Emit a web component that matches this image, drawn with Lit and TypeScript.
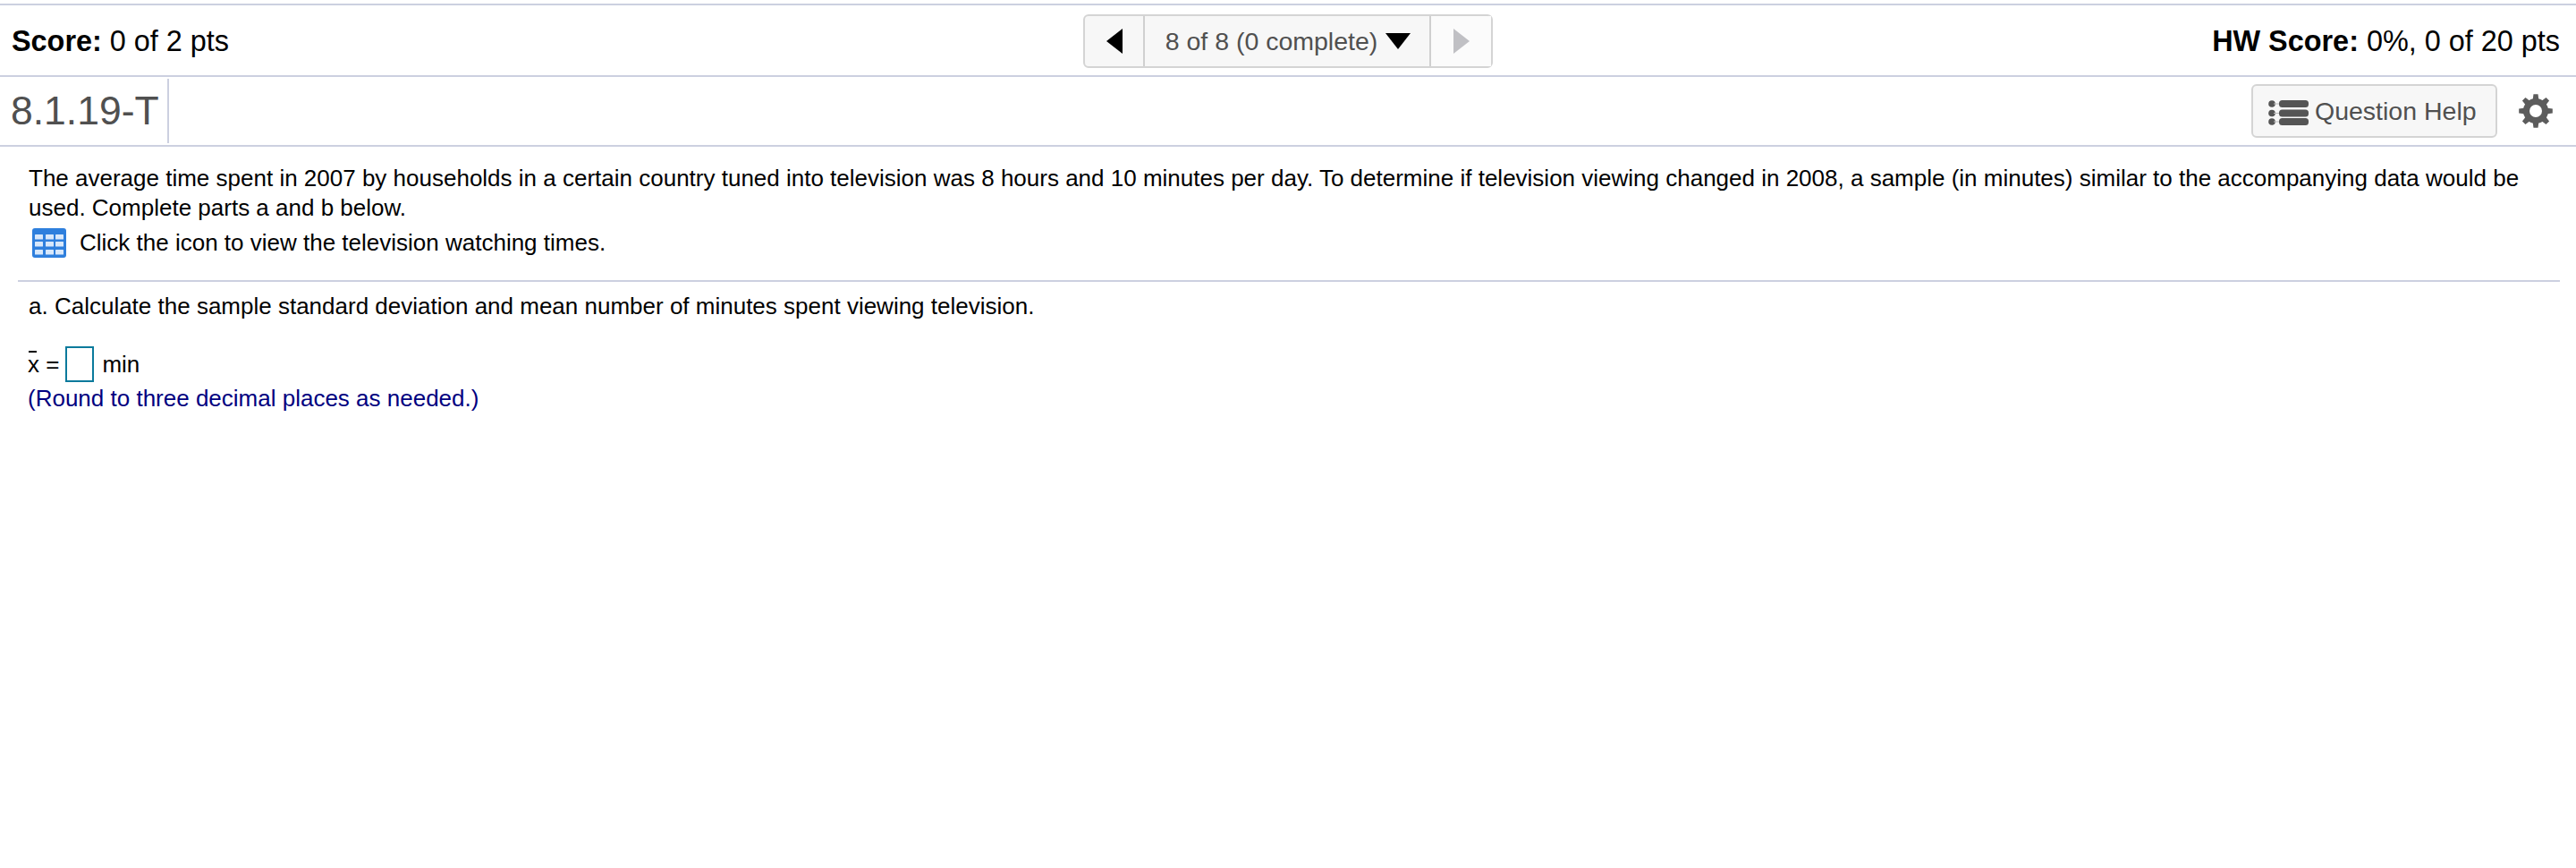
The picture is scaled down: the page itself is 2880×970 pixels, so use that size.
import { LitElement, html, css, svg } from "lit";
import { customElement } from "lit/decorators.js";

@customElement("app-root")
export class AppRoot extends LitElement {
  static styles = css`
    :host { display: block; width: 2880px; height: 970px; background: #fff; font-family: "Liberation Sans", Arial, sans-serif; color: #000; overflow: hidden; }
    .top { margin-top: 4px; height: 78px; box-sizing: content-box; border-top: 2px solid #ccd0e0; border-bottom: 2px solid #ccd0e0; display: flex; align-items: center; justify-content: space-between; padding: 0 18px 0 13px; font-size: 32.4px; position: relative; }
    .top b { font-weight: 700; }
    .score { padding-top: 2px; }
    .pager { position: absolute; left: 1211px; top: 10px; width: 458px; height: 60px; box-sizing: border-box; border: 2px solid #d4d4d4; border-radius: 6px; background: #f7f7f7; display: flex; color: #505050; font-size: 28.5px; }
    .prev { width: 67px; border-right: 2px solid #d0d0d0; display: flex; align-items: center; justify-content: center; box-sizing: border-box; }
    .mid { width: 320px; box-sizing: border-box; border-right: 2px solid #d0d0d0; display: flex; align-items: center; justify-content: center; gap: 9px; white-space: nowrap; padding-left: 2px; }
    .next { flex: 1; display: flex; align-items: center; justify-content: center; background: #fbfbfb; }
    .second { height: 76px; border-bottom: 2px solid #ccd0e0; display: flex; align-items: center; }
    .qid { width: 189px; box-sizing: border-box; padding-left: 12px; font-size: 44.5px; color: #505050; height: 72px; border-right: 2px solid #ccd0e0; display: flex; align-items: center; white-space: nowrap; }
    .right { margin-left: auto; display: flex; align-items: center; padding-right: 25px; }
    .help { width: 275px; height: 60px; box-sizing: border-box; border: 2px solid #d4d4d4; border-radius: 6px; background: #f7f7f7; color: #505050; font-size: 28.5px; display: flex; align-items: center; padding-left: 17px; gap: 6px; white-space: nowrap; }
    .gear { margin-left: 23px; display: block; }
    .content { padding: 0 18px 0 20px; }
    .q { padding: 0 0 0 12px; font-size: 26px; line-height: 33px; margin-top: 19px; width: 2820px; box-sizing: border-box; }
    .click { display: flex; align-items: center; gap: 15px; margin: 3px 0 0 16px; font-size: 26px; height: 38px; }
    .click svg { display: block; }
    hr { border: 0; border-top: 2px solid #ccd0e0; margin: 23px 0 0 0; }
    .a { font-size: 26px; line-height: 34px; margin: 10px 0 0 12px; }
    .ans { display: flex; align-items: center; margin: 28px 0 0 11px; font-size: 26px; height: 40px; }
    .x { position: relative; }
    .x::before { content: ""; position: absolute; left: 1px; top: 0; width: 9px; height: 2px; background: #000; }
    .box { width: 32px; height: 40px; border: 2px solid #0a7a9c; box-sizing: border-box; margin: 0 9px 0 7px; }
    .hint { margin: 1px 0 0 11px; font-size: 26px; color: #000080; line-height: 34px; }
  `;
  render() {
    const angles = [0, 45, 90, 135, 180, 225, 270, 315];
    const cols = [3, 15, 26];
    const rows = [7, 15, 24];
    return html`
      <div class="top">
        <div class="score"><b>Score:</b> 0 of 2 pts</div>
        <div class="pager">
          <div class="prev"><svg width="18" height="28" viewBox="0 0 18 28"><path d="M0 14 18 0V28Z" fill="#000"/></svg></div>
          <div class="mid"><span>8 of 8 (0 complete)</span><svg width="28" height="18" viewBox="0 0 28 18"><path d="M0 0H28L14 18Z" fill="#000"/></svg></div>
          <div class="next"><svg width="18" height="28" viewBox="0 0 18 28"><path d="M18 14 0 0V28Z" fill="#c0c0c4"/></svg></div>
        </div>
        <div class="score"><b>HW Score:</b> 0%, 0 of 20 pts</div>
      </div>
      <div class="second">
        <div class="qid">8.1.19-T</div>
        <div class="right">
          <div class="help">
            <svg width="46" height="32" viewBox="0 0 46 32" fill="#555"><circle cx="4" cy="8" r="3.8"/><circle cx="4" cy="18.5" r="3.8"/><circle cx="4" cy="28" r="3.8"/><path d="M6 7.5H14V8.5H6ZM6 18H14V19H6ZM6 27.5H14V28.5H6Z" fill="#bbb"/><rect x="12" y="4" width="33" height="8" rx="3.5"/><rect x="12" y="14.5" width="33" height="8" rx="3.5"/><rect x="12" y="24" width="33" height="8" rx="3.5"/></svg>
            <span>Question Help</span>
          </div>
          <svg class="gear" width="40" height="40" viewBox="0 0 40 40">
            <g fill="#5c5c5c">${angles.map((a) => svg`<path d="M16.5 9 17.5 1.2H22.5L23.5 9Z" transform="rotate(${a} 20 20)"/>`)}<circle cx="20" cy="20" r="14"/></g>
            <circle cx="20" cy="20" r="7" fill="#fff"/>
          </svg>
        </div>
      </div>
      <div class="content">
        <div class="q">The average time spent in 2007 by households in a certain country tuned into television was 8 hours and 10 minutes per day. To determine if television viewing changed in 2008, a sample (in minutes) similar to the accompanying data would be used. Complete parts a and b below.</div>
        <div class="click">
          <svg width="38" height="33" viewBox="0 0 38 33"><rect width="38" height="33" rx="3" fill="#2e7fdd"/><g fill="#d8e8fb">${rows.map((y) => cols.map((x) => svg`<rect x=${x} y=${y} width="9" height="5.5" rx="0.5"/>`))}</g></svg>
          <span>Click the icon to view the television watching times.</span>
        </div>
        <hr />
        <div class="a">a. Calculate the sample standard deviation and mean number of minutes spent viewing television.</div>
        <div class="ans"><span class="x">x</span>&nbsp;=<span class="box"></span>min</div>
        <div class="hint">(Round to three decimal places as needed.)</div>
      </div>
    `;
  }
}
